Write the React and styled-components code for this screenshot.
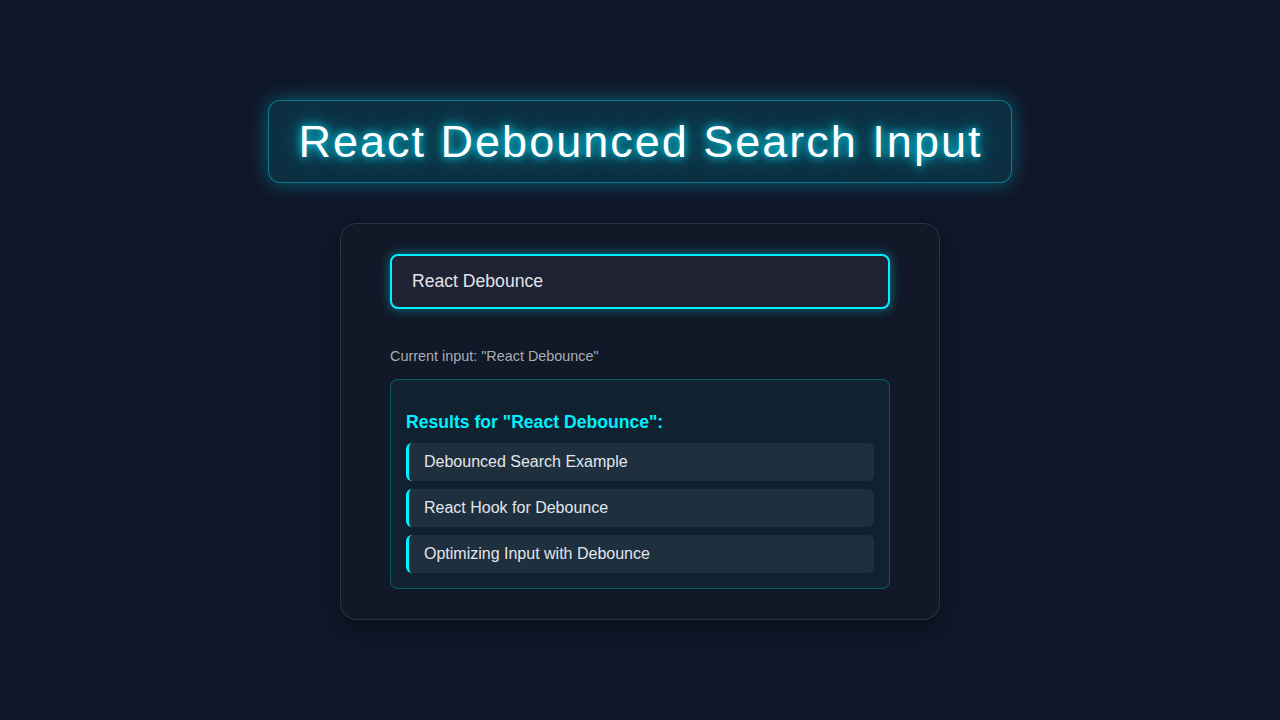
import React, { useState } from "react";
import styled, { createGlobalStyle } from "styled-components";

const GlobalStyle = createGlobalStyle`
  body {
    margin: 0;
    background: #0f1729;
    font-family: "Liberation Sans", Arial, sans-serif;
  }
`;

const Page = styled.div`
  min-height: 100vh;
  display: flex;
  flex-direction: column;
  align-items: center;
  padding-top: 100px;
  box-sizing: border-box;
`;

const Title = styled.h1`
  margin: 0 0 40px;
  padding: 15px 29px 14px 30px;
  font-family: "Liberation Sans", Arial, sans-serif;
  font-size: 45px;
  font-weight: 400;
  letter-spacing: 2px;
  color: #ffffff;
  text-shadow: 0 0 8px #00e5ff, 0 0 20px rgba(0, 229, 255, 0.7);
  background: rgba(0, 200, 220, 0.14);
  border: 1px solid rgba(0, 220, 230, 0.45);
  border-radius: 12px;
  box-shadow: 0 0 20px rgba(0, 229, 255, 0.35);
`;

const Card = styled.div`
  width: 600px;
  box-sizing: border-box;
  padding: 30px 49px;
  background: #111827;
  border: 1px solid #2c3340;
  border-radius: 16px;
  box-shadow: 0 8px 24px rgba(0, 0, 0, 0.4);
`;

const SearchInput = styled.input`
  width: 100%;
  box-sizing: border-box;
  height: 55px;
  padding: 0 20px;
  font-family: "Liberation Sans", Arial, sans-serif;
  font-size: 17.6px;
  color: #e2e4ea;
  background: #1e2233;
  border: 2px solid #00f0ff;
  border-radius: 8px;
  outline: none;
  box-shadow: 0 0 12px rgba(0, 240, 255, 0.45);
`;

const CurrentInput = styled.p`
  margin: 39px 0 15px;
  font-size: 14.4px;
  color: #a9adb6;
`;

const Results = styled.div`
  box-sizing: border-box;
  padding: 15px;
  background: #10222f;
  border: 1px solid rgba(0, 220, 230, 0.3);
  border-radius: 8px;
`;

const ResultsTitle = styled.h3`
  margin: 17px 0 10px;
  font-size: 17.6px;
  font-weight: 700;
  color: #00f0ff;
`;

const List = styled.ul`
  list-style: none;
  margin: 0;
  padding: 0;
  display: flex;
  flex-direction: column;
  gap: 8px;
`;

const Item = styled.li`
  height: 38px;
  display: flex;
  align-items: center;
  padding-left: 15px;
  font-size: 16px;
  color: #e4e6eb;
  background: #1e2f3e;
  border-left: 3px solid #00f0ff;
  border-radius: 6px;
`;

const results = [
  "Debounced Search Example",
  "React Hook for Debounce",
  "Optimizing Input with Debounce",
];

export default function App() {
  const [query, setQuery] = useState("React Debounce");

  return (
    <Page>
      <GlobalStyle />
      <Title>React Debounced Search Input</Title>
      <Card>
        <SearchInput value={query} onChange={(e) => setQuery(e.target.value)} />
        <CurrentInput>Current input: "{query}"</CurrentInput>
        <Results>
          <ResultsTitle>Results for "{query}":</ResultsTitle>
          <List>
            {results.map((r) => (
              <Item key={r}>{r}</Item>
            ))}
          </List>
        </Results>
      </Card>
    </Page>
  );
}
